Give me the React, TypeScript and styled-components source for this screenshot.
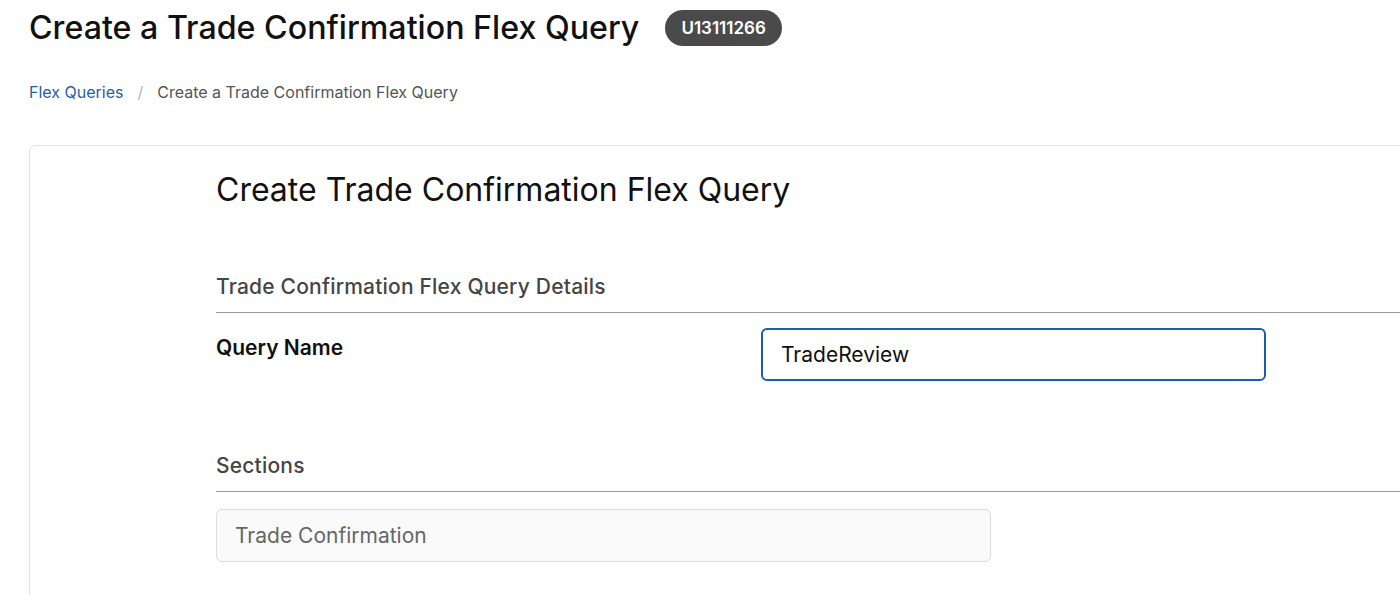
import React from "react";
import styled, { createGlobalStyle } from "styled-components";

const GlobalStyle = createGlobalStyle`
    html, body {
        margin: 0;
        padding: 0;
        background: #ffffff;
        font-family: Inter, Lato, "Liberation Sans", sans-serif;
        color: #111;
        overflow: hidden;
    }
`

const Page = styled.div`
    padding-left: 29px;
    width: 1400px;
    box-sizing: border-box;
`

const Header = styled.div`
    display: flex;
    align-items: center;
    height: 56px;
`

const PageTitle = styled.h1`
    margin: 0;
    font-size: 32.2px;
    font-weight: 500;
    line-height: 40px;
    color: #111;
`

const Badge = styled.span`
    margin-left: 26px;
    height: 36px;
    padding: 0 16px;
    border-radius: 18px;
    background-color: #4a4a4a;
    color: #fff;
    font-size: 17px;
    font-weight: 600;
    display: flex;
    align-items: center;
`

const Breadcrumb = styled.nav`
    margin-top: 26px;
    display: flex;
    align-items: center;
    font-size: 16px;
    line-height: 20px;
    color: #555;
`

const CrumbLink = styled.a`
    color: #1f5ea8;
    text-decoration: none;
`

const CrumbSep = styled.span`
    color: #b5b5b5;
    margin: 0 14px;
`

const Card = styled.section`
    margin-top: 43px;
    margin-right: -60px;
    border: 1px solid #e4e4e4;
    border-radius: 6px;
    padding: 24px 0 40px 186px;
    min-height: 500px;
`

const CardTitle = styled.h2`
    margin: 0;
    font-size: 32px;
    font-weight: 400;
    line-height: 40px;
    color: #111;
`

const SectionTitle = styled.h3<{ $top: number }>`
    margin: ${({ $top }) => $top}px 0 0 0;
    padding-bottom: 12px;
    border-bottom: 1px solid #9a9a9a;
    font-size: 21px;
    font-weight: 500;
    letter-spacing: 0.2px;
    line-height: 26px;
    color: #454545;
`

const FormRow = styled.div`
    margin-top: 15px;
    display: grid;
    grid-template-columns: 545px 505px;
    align-items: start;
`

const FieldLabel = styled.label`
    margin-top: 7px;
    font-size: 21px;
    font-weight: 600;
    line-height: 26px;
    color: #111;
`

const TextInput = styled.input<{ $width: number; $disabled?: boolean }>`
    box-sizing: border-box;
    width: ${({ $width }) => $width}px;
    height: 53px;
    padding: 0 18px;
    font-family: inherit;
    font-size: 21px;
    border-radius: 6px;
    outline: none;
    color: ${({ $disabled }) => ($disabled ? "#666" : "#111")};
    background-color: ${({ $disabled }) => ($disabled ? "#fafafa" : "#fff")};
    border: ${({ $disabled }) => ($disabled ? "1px solid #dcdcdc" : "2.5px solid #1d5ca8")};
    margin-top: ${({ $disabled }) => ($disabled ? "17px" : "0")};
    display: block;
`

function App() {
    const [queryName, setQueryName] = React.useState("TradeReview");

    return (
        <>
            <GlobalStyle />
            <Page>
                <Header>
                    <PageTitle>Create a Trade Confirmation Flex Query</PageTitle>
                    <Badge>U13111266</Badge>
                </Header>

                <Breadcrumb>
                    <CrumbLink href="#">Flex Queries</CrumbLink>
                    <CrumbSep>/</CrumbSep>
                    <span>Create a Trade Confirmation Flex Query</span>
                </Breadcrumb>

                <Card>
                    <CardTitle>Create Trade Confirmation Flex Query</CardTitle>

                    <SectionTitle $top={64}>Trade Confirmation Flex Query Details</SectionTitle>
                    <FormRow>
                        <FieldLabel htmlFor="queryName">Query Name</FieldLabel>
                        <TextInput
                            id="queryName"
                            $width={505}
                            value={queryName}
                            onChange={e => setQueryName(e.target.value)}
                        />
                    </FormRow>

                    <SectionTitle $top={72}>Sections</SectionTitle>
                    <TextInput $width={775} $disabled value="Trade Confirmation" readOnly />
                </Card>
            </Page>
        </>
    );
}

export default App;
